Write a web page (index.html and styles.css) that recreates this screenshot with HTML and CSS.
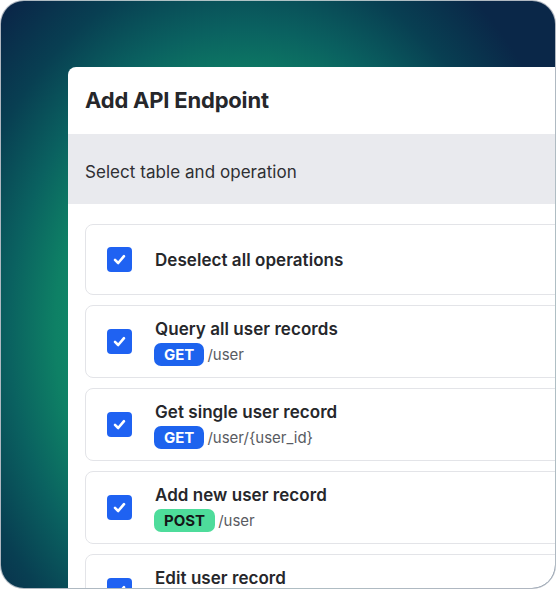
FILE: index.html
```html
<!DOCTYPE html>
<html lang="en">
<head>
<meta charset="utf-8">
<title>Add API Endpoint</title>
<link rel="stylesheet" href="styles.css">
</head>
<body>
<div class="frame">
  <section class="card">
    <h1 class="card-title">Add API Endpoint</h1>
    <div class="card-sub">Select table and operation</div>
    <ul class="ops">
      <li class="op op-single">
        <span class="check"><svg viewBox="0 0 25 25" width="25" height="25"><polyline points="8,12.8 11.2,16 17,9.2" /></svg></span>
        <div class="op-body"><div class="op-title">Deselect all operations</div></div>
      </li>
      <li class="op">
        <span class="check"><svg viewBox="0 0 25 25" width="25" height="25"><polyline points="8,12.8 11.2,16 17,9.2" /></svg></span>
        <div class="op-body">
          <div class="op-title">Query all user records</div>
          <div class="op-route"><span class="method get">GET</span><span class="path">/user</span></div>
        </div>
      </li>
      <li class="op">
        <span class="check"><svg viewBox="0 0 25 25" width="25" height="25"><polyline points="8,12.8 11.2,16 17,9.2" /></svg></span>
        <div class="op-body">
          <div class="op-title">Get single user record</div>
          <div class="op-route"><span class="method get">GET</span><span class="path">/user/{user_id}</span></div>
        </div>
      </li>
      <li class="op">
        <span class="check"><svg viewBox="0 0 25 25" width="25" height="25"><polyline points="8,12.8 11.2,16 17,9.2" /></svg></span>
        <div class="op-body">
          <div class="op-title">Add new user record</div>
          <div class="op-route"><span class="method post">POST</span><span class="path">/user</span></div>
        </div>
      </li>
      <li class="op">
        <span class="check"><svg viewBox="0 0 25 25" width="25" height="25"><polyline points="8,12.8 11.2,16 17,9.2" /></svg></span>
        <div class="op-body">
          <div class="op-title">Edit user record</div>
          <div class="op-route"><span class="method put">PUT</span><span class="path">/user/{user_id}</span></div>
        </div>
      </li>
    </ul>
  </section>
</div>
</body>
</html>
```
FILE: styles.css
```css
* { box-sizing: border-box; }

html, body {
  margin: 0;
  padding: 0;
  background: #ffffff;
}

body {
  font-family: Inter, "Noto Sans", sans-serif;
  color: #26272b;
}

.frame {
  width: 556px;
  height: 589px;
  border: 1px solid rgba(205, 208, 214, 0.85);
  border-radius: 24px;
  overflow: hidden;
  padding: 66px 0 0 67px;
  background:
    radial-gradient(ellipse 330px 420px at 245px 330px,
      #15a674 0%,
      #12966d 40%,
      #0e8065 58%,
      #0a6160 72%,
      #083f52 88%,
      #0a2748 105%);
  background-color: #0a2748;
}

.card {
  width: 620px;
  background: #ffffff;
  border-radius: 8px 0 0 0;
  min-height: 560px;
}

.card-title {
  margin: 0;
  height: 67px;
  display: flex;
  align-items: center;
  padding: 0 17px 1px;
  font-size: 22px;
  font-weight: 700;
  letter-spacing: -0.2px;
  color: #26272b;
}

.card-sub {
  height: 70px;
  display: flex;
  align-items: center;
  padding: 5px 17px 0;
  background: #e9eaee;
  font-size: 17px;
  letter-spacing: 0.05px;
  color: #2e2f33;
}

.ops {
  list-style: none;
  margin: 0;
  padding: 20px 0 0 17px;
  display: flex;
  flex-direction: column;
  gap: 10px;
}

.op {
  display: flex;
  align-items: center;
  gap: 23px;
  min-height: 73px;
  padding: 11px 21px;
  border: 1px solid #e3e4e8;
  border-radius: 8px;
}

.op-single { min-height: 71px; }

.check {
  flex: none;
  width: 25px;
  height: 25px;
  border-radius: 4px;
  background: #1f62f2;
  display: flex;
  margin-bottom: 1px;
}

.check svg polyline {
  fill: none;
  stroke: #ffffff;
  stroke-width: 2.6;
  stroke-linecap: round;
  stroke-linejoin: round;
}

.op-body {
  display: flex;
  flex-direction: column;
  gap: 3px;
}

.op-title {
  font-size: 17px;
  line-height: 22px;
  font-weight: 600;
  letter-spacing: 0.05px;
  color: #26272b;
}

.op-route {
  display: flex;
  align-items: center;
  gap: 3px;
  margin-left: -1px;
}

.method {
  display: inline-flex;
  align-items: center;
  height: 23px;
  padding: 0 10px;
  border-radius: 7px;
  font-size: 15px;
  font-weight: 700;
}

.get { background: #1d63ee; color: #ffffff; }
.post { background: #4edc9b; color: #141517; }
.put { background: #f5a524; color: #141517; }

.path {
  font-size: 15px;
  color: #595b62;
}
```
